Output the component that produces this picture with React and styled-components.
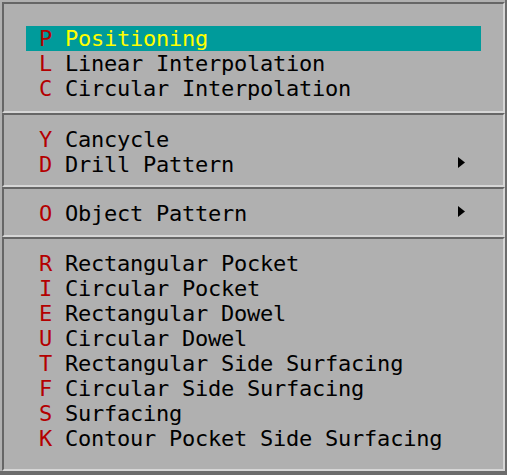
import React from "react";
import styled, { createGlobalStyle } from "styled-components";

const GlobalStyle = createGlobalStyle`
    html, body {
        margin: 0;
        padding: 0;
        background: #b0b0b0;
    }
`

const Window = styled.div`
    width: 507px;
    height: 475px;
    padding: 2px 0 0 2px;
    box-sizing: border-box;
    background: #b0b0b0;
    border-right: 2px solid #6c6c6c;
    border-bottom: 4px solid #6c6c6c;
    display: flex;
    flex-direction: column;
    font-family: "DejaVu Sans Mono", "Liberation Mono", monospace;
    font-size: 22px;
    letter-spacing: -0.24px;
`

const Section = styled.div`
    display: flex;
    flex-direction: column;
    border-top: 2px solid #666666;
    border-left: 2px solid #666666;
    border-bottom: 2px solid #d6d6d6;
    border-right: 2px solid #d6d6d6;
    padding-top: ${(props) => props.top}px;
    padding-bottom: ${(props) => props.bottom}px;
    flex: ${(props) => (props.grow ? 1 : "none")};
`

const Row = styled.div`
    display: flex;
    align-items: center;
    height: 25px;
    margin: 0 22px;
    padding: 0 16px 0 13px;
    background: ${(props) => (props.active ? "#009b9b" : "transparent")};
    color: ${(props) => (props.active ? "#ffff00" : "#000000")};
    white-space: pre;
`

const Hotkey = styled.span`
    width: 26px;
    color: #b40000;
    flex: none;
`

const Label = styled.span`
    flex: 1;
`

const Arrow = styled.svg`
    width: 7px;
    height: 11px;
    margin-top: -4px;
    flex: none;
`

const sections = [
    {
        top: 22,
        bottom: 10,
        items: [
            { key: "P", label: "Positioning", active: true },
            { key: "L", label: "Linear Interpolation" },
            { key: "C", label: "Circular Interpolation" },
        ],
    },
    {
        top: 12,
        bottom: 8,
        items: [
            { key: "Y", label: "Cancycle" },
            { key: "D", label: "Drill Pattern", sub: true },
        ],
    },
    {
        top: 12,
        bottom: 9,
        items: [{ key: "O", label: "Object Pattern", sub: true }],
    },
    {
        top: 12,
        bottom: 18,
        grow: true,
        items: [
            { key: "R", label: "Rectangular Pocket" },
            { key: "I", label: "Circular Pocket" },
            { key: "E", label: "Rectangular Dowel" },
            { key: "U", label: "Circular Dowel" },
            { key: "T", label: "Rectangular Side Surfacing" },
            { key: "F", label: "Circular Side Surfacing" },
            { key: "S", label: "Surfacing" },
            { key: "K", label: "Contour Pocket Side Surfacing" },
        ],
    },
]

const App = () => {
    return (
        <>
            <GlobalStyle />
            <Window>
                {sections.map((section, i) => (
                    <Section key={i} top={section.top} bottom={section.bottom} grow={section.grow}>
                        {section.items.map((item) => (
                            <Row key={item.key} active={item.active}>
                                <Hotkey>{item.key}</Hotkey>
                                <Label>{item.label}</Label>
                                {item.sub && (
                                    <Arrow viewBox="0 0 7 11">
                                        <polygon points="0,0 7,5.5 0,11" fill="#000" />
                                    </Arrow>
                                )}
                            </Row>
                        ))}
                    </Section>
                ))}
            </Window>
        </>
    )
}

export default App;
